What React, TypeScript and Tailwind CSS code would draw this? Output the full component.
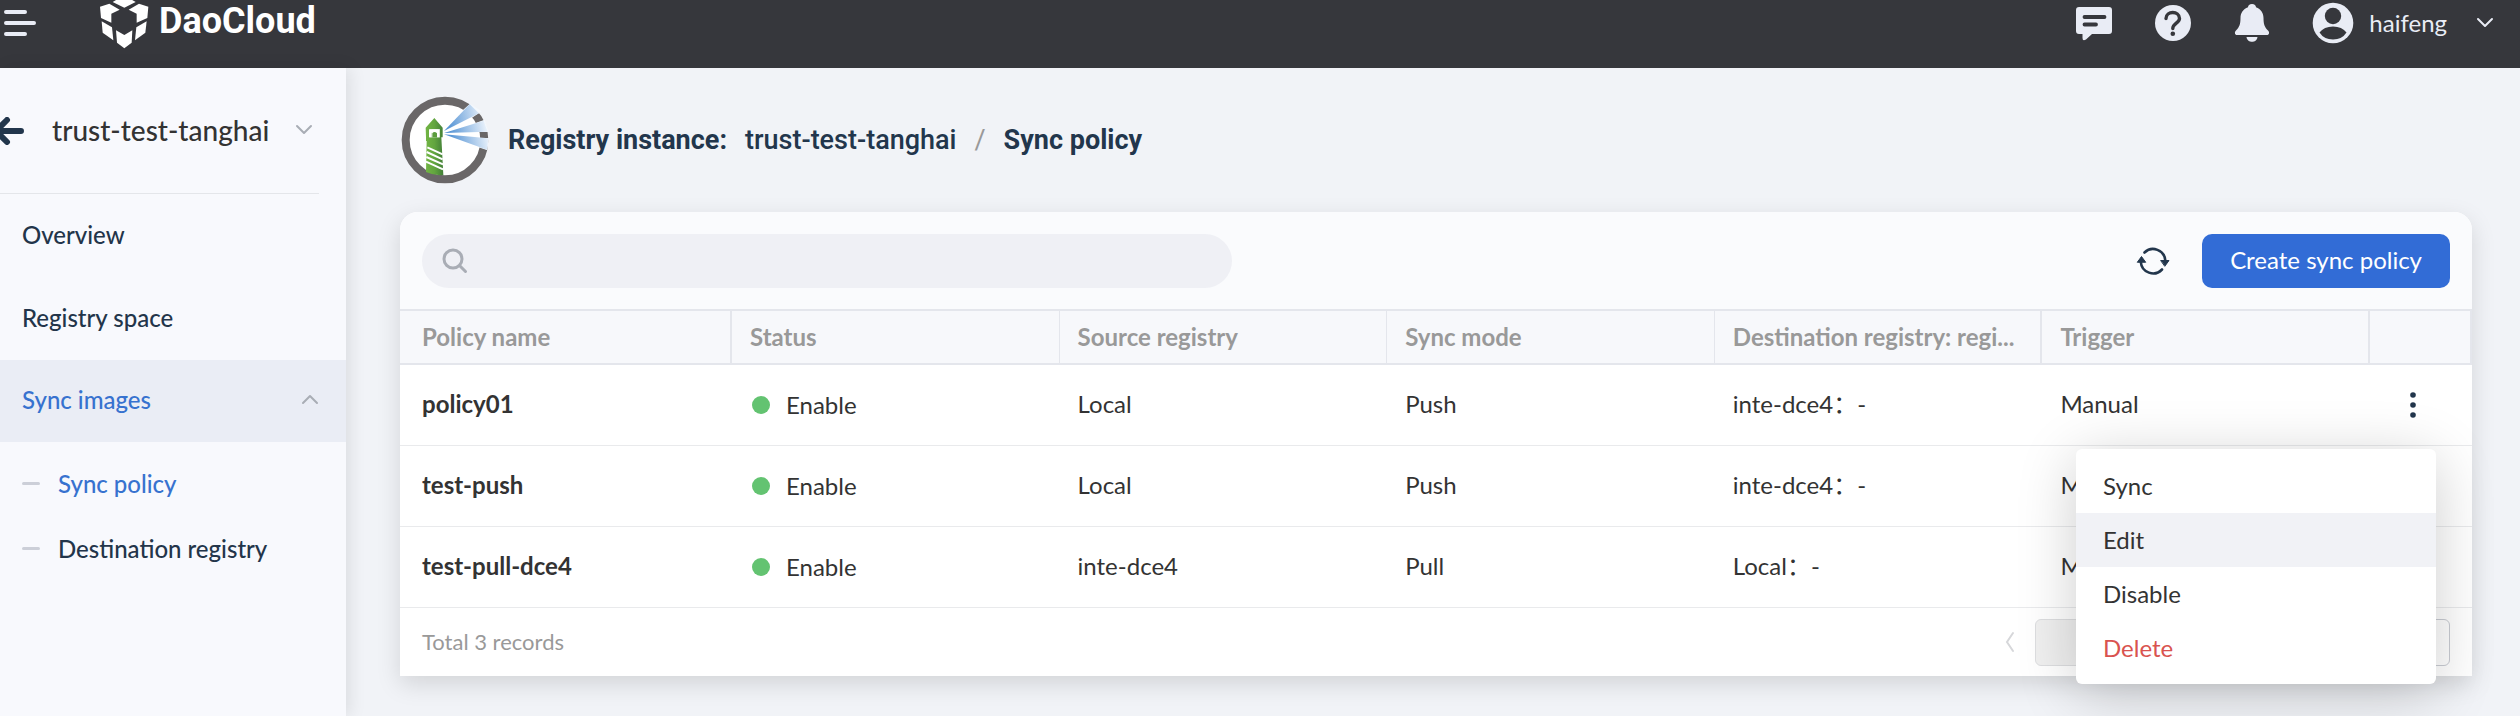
import React from "react";

const policies = [
  { name: "policy01", source: "Local", mode: "Push", destination: "inte-dce4：-", trigger: "Manual" },
  { name: "test-push", source: "Local", mode: "Push", destination: "inte-dce4：-", trigger: "Manual" },
  { name: "test-pull-dce4", source: "inte-dce4", mode: "Pull", destination: "Local：-", trigger: "Manual" },
];

const columns = [
  { label: "Policy name", style: "w-[332px] pl-[22px] border-r-2" },
  { label: "Status", style: "pl-[18px] border-r" },
  { label: "Source registry", style: "pl-[18px] border-r" },
  { label: "Sync mode", style: "pl-[18px] border-r" },
  { label: "Destination registry: regi...", style: "pl-[18px] border-r-2" },
  { label: "Trigger", style: "pl-[18px] border-r-2" },
];

function Chevron({ className, d }: { className: string; d: string }) {
  return (
    <svg viewBox="0 0 18 18" className={className} fill="none" stroke="currentColor" strokeWidth="2" strokeLinecap="round" strokeLinejoin="round" aria-hidden="true">
      <path d={d} />
    </svg>
  );
}

function BrandMark() {
  return (
    <svg viewBox="27 0 150 147" className="h-[49px] w-[50px]" fill="#fff" aria-hidden="true">
      <path d="M68 6 102-14 137 6 103 23Z" />
      <path d="M30 20 58 11 89 29 64 41V68L33 54Z" />
      <path d="M175 20 147 11 116 29 140 41V68L172 54Z" />
      <path d="M35 64 66 82 70 121 38 98Z" />
      <path d="M170 64 139 82 135 121 166 98Z" />
      <path d="M78 91 103 105 127 91 125 128 103 145 81 128Z" />
    </svg>
  );
}

function HarborLogo() {
  return (
    <svg viewBox="30 36 264 264" className="size-[88px] overflow-visible" aria-hidden="true">
      <defs>
        <linearGradient id="ray" gradientUnits="userSpaceOnUse" x1="160" y1="148" x2="290" y2="120">
          <stop offset="0" stopColor="#3f86cf" />
          <stop offset="0.45" stopColor="#8db7e3" />
          <stop offset="1" stopColor="#edf4fc" />
        </linearGradient>
        <linearGradient id="tower" x1="0" x2="1" y1="0" y2="0">
          <stop offset="0" stopColor="#72b544" />
          <stop offset="0.5" stopColor="#62a53f" />
          <stop offset="1" stopColor="#427f37" />
        </linearGradient>
      </defs>
      <circle cx="165" cy="168" r="118" fill="#fff" stroke="#6a6768" strokeWidth="24" />
      <path d="M219 78 240 59 275 82 244 103Z" fill="#f4f8fd" />
      <path d="M250 119 284 107 296 144H266Z" fill="#f4f8fd" />
      <path d="M268 162H297L292 199 266 190Z" fill="#f4f8fd" />
      <path d="M162 141 239 61 267 88Z" fill="url(#ray)" />
      <path d="M162 147 281 110Q286 126 293 143Z" fill="url(#ray)" />
      <path d="M162 151 295 163 291 197Z" fill="url(#ray)" />
      <path d="M107 131 133 102 158 131V160H154L160 273Q134 276 108 264L110 171H108V160Z" fill="url(#tower)" />
      <path d="M117 136H150V160H117Z" fill="#fff" />
      <path d="M121 137H125V160H121ZM144 137H148V160H144Z" fill="#5b9c3e" />
      <path d="M125 160V147Q133 136 142 147V160H148V136H119V160Z" fill="#fff" />
      <path d="M127 160V148Q133 140 141 148V160Z" fill="#5b9c3e" />
      <path d="M112 190 158 211M110 204 158 226M109 219 159 241M108 233 159 256" stroke="#fff" strokeWidth="6" />
    </svg>
  );
}

function Header() {
  return (
    <header className="flex items-start justify-between bg-[#36373c] pr-[26px] pb-[22px] text-[#e9ecf5]">
      <div className="flex h-[46px] items-start">
        <button type="button" aria-label="Toggle navigation" className="flex h-[46px] w-[99px] items-center pl-1">
          <svg viewBox="0 0 32 26" className="h-[26px] w-8" stroke="currentColor" strokeWidth="4" strokeLinecap="round" aria-hidden="true">
            <path d="M2 2H21M2 13H30M2 24H21" />
          </svg>
        </button>
        <a href="#home" className="flex items-start gap-[10px]">
          <BrandMark />
          <span className="text-[36px] leading-[43px] font-bold text-white font-[Roboto,sans-serif]">DaoCloud</span>
        </a>
      </div>
      <div className="flex h-[46px] items-center">
        <button type="button" aria-label="Messages" className="mr-[43px]">
          <svg viewBox="0 0 36 36" className="size-9" fill="currentColor" aria-hidden="true">
            <path d="M3 2H33Q36 2 36 5V26Q36 29 33 29H16L10 34.500Q6.500 36.500 6.500 33V29H3Q0 29 0 26V5Q0 2 3 2Z" />
            <path d="M8.500 12H28.500M8.500 19.500H20" stroke="#36373c" strokeWidth="3.800" strokeLinecap="round" />
          </svg>
        </button>
        <button type="button" aria-label="Help" className="mr-[43px]">
          <svg viewBox="0 0 36 36" className="size-9" aria-hidden="true">
            <circle cx="18" cy="18" r="18" fill="currentColor" />
            <path d="M11 13.500C11 5.500 24.500 5.500 24.500 13.500C24.500 18 17.800 18.500 17.800 23.500" fill="none" stroke="#36373c" strokeWidth="3.400" strokeLinecap="round" />
            <circle cx="17.800" cy="28.800" r="2.300" fill="#36373c" />
          </svg>
        </button>
        <button type="button" aria-label="Notifications" className="mr-[42px]">
          <svg viewBox="0 0 36 38" className="h-[38px] w-9" fill="currentColor" aria-hidden="true">
            <path d="M18 0C20.500 0 22 1.500 22 3.200C27 5 29.500 9 29.500 14C29.500 20 30.500 23 34 26.500C36 28.600 35 31 33 31H3C1 31 0 28.600 2 26.500C5.500 23 6.500 20 6.500 14C6.500 9 9 5 14 3.200C14 1.500 15.500 0 18 0Z" />
            <path d="M12.500 33H23.500C23 36.500 20.500 37.800 18 37.800C15.500 37.800 13 36.500 12.500 33Z" />
          </svg>
        </button>
        <button type="button" className="flex items-center text-2xl leading-8">
          <svg viewBox="0 0 42 42" className="mr-[15px] size-[42px]" aria-hidden="true">
            <circle cx="21" cy="21" r="20.300" fill="currentColor" />
            <circle cx="21" cy="14" r="8.200" fill="#36373c" />
            <path d="M7.500 30.500Q12 24.500 21 24.500T34.500 30.500Q30 37.500 21 37.500T7.500 30.500Z" fill="#36373c" />
          </svg>
          haifeng
          <Chevron className="ml-[29px] size-[18px]" d="M2 5 9 12 16 5" />
        </button>
      </div>
    </header>
  );
}

function Sidebar() {
  return (
    <aside className="z-10 w-[346px] shrink-0 bg-[#f8f9fd] text-2xl font-medium text-[#23354a] shadow-[4px_0_16px_rgba(0,0,0,0.09)]">
      <div className="mr-[27px] flex h-[126px] items-center border-b border-[#e4e6ea]">
        <a href="#registries" aria-label="Back">
          <svg viewBox="0 0 24 28" className="h-7 w-6" fill="none" stroke="#22364c" strokeWidth="6" strokeLinecap="round" strokeLinejoin="round" aria-hidden="true">
            <path d="M21 14H-4M7 3-4 14 7 25" />
          </svg>
        </a>
        <button type="button" className="flex flex-1 items-center justify-between pr-[6px] pb-[2px] pl-7 text-[28px] leading-9 text-[#333]">
          trust-test-tanghai
          <Chevron className="size-[18px] text-[#a9adb5]" d="M2 5 9 12 16 5" />
        </button>
      </div>
      <nav>
        <a href="#overview" className="flex h-[83px] items-center pb-[2px] pl-[22px]">Overview</a>
        <a href="#space" className="flex h-[83px] items-center pb-[2px] pl-[22px]">Registry space</a>
        <button type="button" aria-expanded="true" className="flex h-[82px] w-full items-center justify-between bg-[#eaedf5] pr-[27px] pb-[2px] pl-[22px] text-[#3772cf]">
          Sync images
          <Chevron className="size-[18px] text-[#a9adb5]" d="M2 12 9 5 16 12" />
        </button>
        <div className="pt-[9px]">
          <a href="#sync-policy" className="flex h-[65px] items-center gap-[18px] pl-[22px] text-[#3772cf]">
            <span className="h-[3px] w-[18px] rounded-full bg-[#cccfd8]" />
            Sync policy
          </a>
          <a href="#destination" className="flex h-[65px] items-center gap-[18px] pl-[22px]">
            <span className="h-[3px] w-[18px] rounded-full bg-[#cccfd8]" />
            Destination registry
          </a>
        </div>
      </nav>
    </aside>
  );
}

function ActionMenu() {
  return (
    <div role="menu" className="absolute top-[84px] right-9 z-20 flex w-[360px] flex-col rounded-md bg-white pt-[10px] pb-[9px] text-[#333] shadow-[0_10px_60px_rgba(0,0,0,0.2)]">
      <button type="button" role="menuitem" className="h-[54px] pl-[27px] text-left">Sync</button>
      <button type="button" role="menuitem" className="h-[54px] bg-[#f1f2f6] pl-[27px] text-left">Edit</button>
      <button type="button" role="menuitem" className="h-[54px] pl-[27px] text-left">Disable</button>
      <button type="button" role="menuitem" className="h-[54px] pl-[27px] text-left text-[#d9534f]">Delete</button>
    </div>
  );
}

function PolicyTable() {
  return (
    <table className="w-full table-fixed border-separate border-spacing-0 text-left">
      <thead>
        <tr className="h-[56px] text-[#999]">
          {columns.map((column) => (
            <th key={column.label} className={`truncate border-y-2 border-[#e4e6ec] bg-[#f7f8fb] pr-3 font-bold ${column.style}`}>
              {column.label}
            </th>
          ))}
          <th className="w-[102px] border-y-2 border-r-2 border-[#e4e6ec] bg-[#f7f8fb]" aria-label="Actions" />
        </tr>
      </thead>
      <tbody className="text-[#333]">
        {policies.map((policy, index) => (
          <tr key={policy.name} className="h-[81px] bg-white">
            <td className="border-b border-[#e9eaec] pb-[2px] pl-[22px] font-bold">{policy.name}</td>
            <td className="border-b border-[#e9eaec] pl-[20px]">
              <span className="flex items-center gap-4">
                <span className="size-[18px] rounded-full bg-[#63c371]" />
                Enable
              </span>
            </td>
            <td className="border-b border-[#e9eaec] pb-[2px] pl-[18px]">{policy.source}</td>
            <td className="border-b border-[#e9eaec] pb-[2px] pl-[18px]">{policy.mode}</td>
            <td className="border-b border-[#e9eaec] pb-[2px] pl-[18px]">{policy.destination}</td>
            <td className="border-b border-[#e9eaec] pb-[2px] pl-[18px]">{policy.trigger}</td>
            <td className="relative border-b border-[#e9eaec] pl-[35px]">
              <button type="button" aria-label={`Actions for ${policy.name}`} className="flex h-8 w-4 items-center justify-center">
                <svg viewBox="0 0 6 26" className="h-[26px] w-[6px]" fill="#22364c" aria-hidden="true">
                  <circle cx="3" cy="3" r="2.800" />
                  <circle cx="3" cy="13" r="2.800" />
                  <circle cx="3" cy="23" r="2.800" />
                </svg>
              </button>
              {index === 0 && <ActionMenu />}
            </td>
          </tr>
        ))}
      </tbody>
    </table>
  );
}

export default function App() {
  return (
    <div className="flex min-h-screen flex-col bg-[#f1f3f7] text-2xl leading-8 font-[Lato,'Noto_Sans_CJK_SC',sans-serif]">
      <Header />
      <div className="flex flex-1">
        <Sidebar />
        <main className="min-w-0 flex-1 pt-7 pr-12 pb-10 pl-[54px]">
          <nav aria-label="Breadcrumb" className="flex items-center text-[27px] leading-9 font-medium text-[#22364c] font-[Roboto,sans-serif]">
            <HarborLogo />
            <span className="ml-5 font-bold">Registry instance:</span>
            <a href="#instance" className="ml-[18px]">trust-test-tanghai</a>
            <span className="mx-[18px] font-normal text-[#999]">/</span>
            <span className="font-bold">Sync policy</span>
          </nav>
          <section className="mt-7 rounded-t-[18px] bg-white shadow-[0_8px_24px_rgba(0,0,0,0.13)]">
            <div className="flex items-center rounded-t-[18px] bg-[#fafbfd] px-[22px] pt-[22px] pb-[21px]">
              <label className="flex h-[54px] w-[810px] items-center rounded-full bg-[#eff0f5] pl-5">
                <svg viewBox="0 0 26 26" className="size-[26px]" fill="none" stroke="#a9adb5" strokeWidth="3" strokeLinecap="round" aria-hidden="true">
                  <circle cx="11" cy="11" r="9" />
                  <path d="M18 18 23.500 23.500" />
                </svg>
                <input type="search" aria-label="Search policies" className="h-full min-w-0 flex-1 bg-transparent px-3 outline-none" />
              </label>
              <button type="button" aria-label="Refresh" className="mr-8 ml-auto">
                <svg viewBox="0 0 34 34" className="size-[34px]" fill="none" stroke="#22364c" strokeWidth="2.600" strokeLinecap="round" aria-hidden="true">
                  <path d="M8.500 8.500A12.300 12.300 0 0 1 29.300 16.500M4.800 18A12.300 12.300 0 0 0 26 25.500" />
                  <path d="M1.500 18 5.500 12.500 9.500 18ZM25 16.500H33L29 22Z" fill="#22364c" strokeWidth="1" strokeLinejoin="round" />
                </svg>
              </button>
              <button type="button" className="h-[54px] rounded-[10px] bg-[#326cd6] px-7 pb-[2px] text-white">Create sync policy</button>
            </div>
            <PolicyTable />
            <footer className="flex h-[68px] items-center justify-between px-[22px] text-[#999]">
              <p className="text-[22px]">Total 3 records</p>
              <div className="flex items-center">
                <button type="button" aria-label="Previous page" className="mr-[13px]">
                  <svg viewBox="0 0 24 24" className="size-6" fill="none" stroke="#d6d7da" strokeWidth="2" strokeLinecap="round" aria-hidden="true">
                    <path d="M15 3 9 12 15 21" />
                  </svg>
                </button>
                <input aria-label="Page" disabled className="h-[47px] w-[120px] rounded-md border border-[#dddee0] bg-[#f0f0f0]" />
                <select aria-label="Rows per page" className="ml-[95px] h-[47px] w-[200px] appearance-none rounded-md border border-[#c9ccd3] bg-white" />
              </div>
            </footer>
          </section>
        </main>
      </div>
    </div>
  );
}
